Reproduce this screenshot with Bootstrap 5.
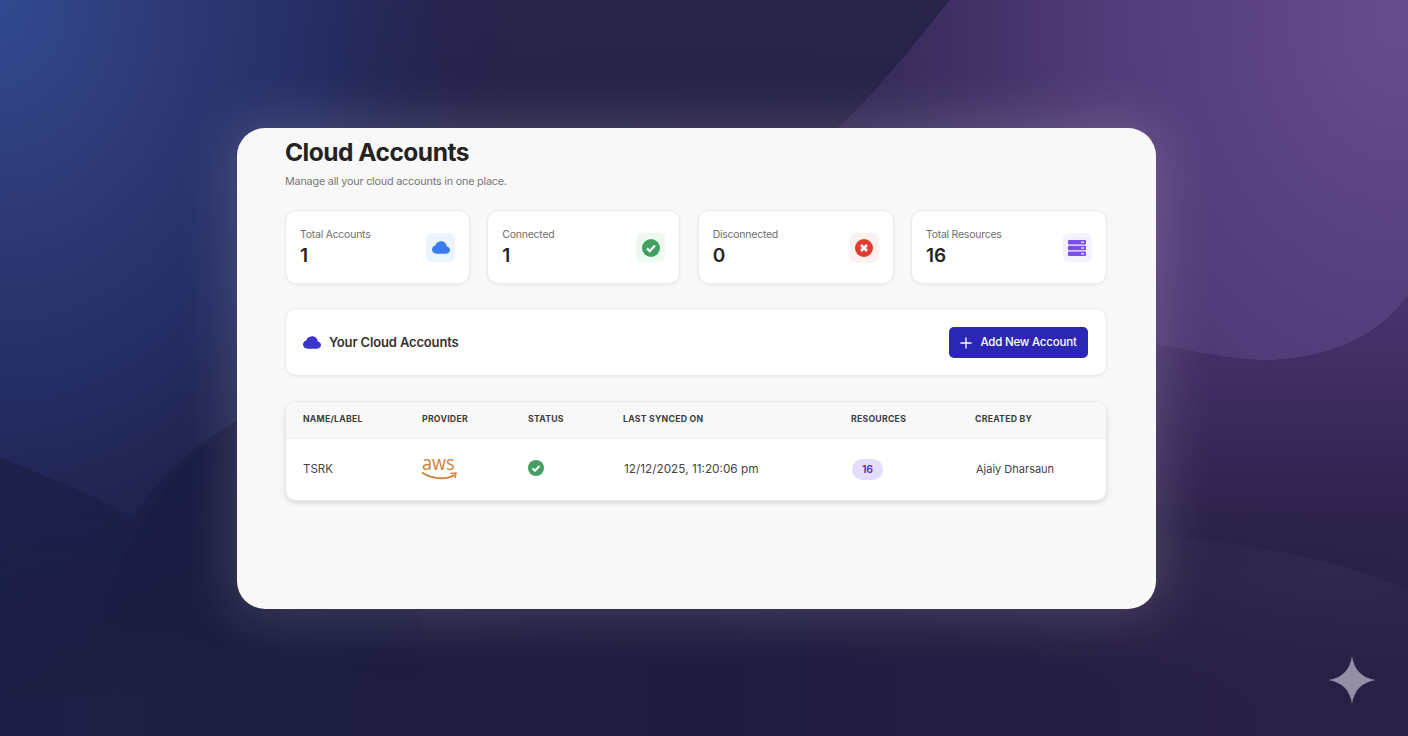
<!DOCTYPE html>
<html lang="en">
<head>
<meta charset="utf-8">
<title>Cloud Accounts</title>
<link href="https://cdn.jsdelivr.net/npm/bootstrap@5.3.0/dist/css/bootstrap.min.css" rel="stylesheet">
<style>
html,body{height:100%;margin:0}
body{font-family:Inter,"Liberation Sans",sans-serif;background:#1f1d40;overflow:hidden;position:relative;color:#262626}
.bg-art{position:absolute;inset:0;width:100%;height:100%}
.spark{position:absolute;right:32px;bottom:32px;width:48px;height:48px}
.stage{position:relative;height:100%;padding-right:15px}
.panel{width:919px;height:481px;border-radius:28px;background:#f8f8f8;padding:7px 49px 0 48px;box-shadow:0 0 55px 6px rgba(255,255,255,.17)}
.page-title{font-size:24.5px;font-weight:700;line-height:34px;letter-spacing:-.5px;margin:0;color:#232323}
.page-sub{font-size:10.8px;line-height:16px;letter-spacing:-.2px;color:#777;margin:5px 0 20px}
.stats{display:grid;grid-template-columns:185px 193px 196px 196px;gap:17.33px}
.stat{height:74px;background:#fff;border:1px solid #e9eaea;border-radius:11px;box-shadow:0 1px 3px rgba(0,0,0,.06);padding:0 14px}
.stat-label{font-size:10.5px;line-height:14px;letter-spacing:-.25px;color:#6f6f6f;margin-top:2px}
.stat-num{font-size:19px;font-weight:600;line-height:24px;color:#252525;margin-top:2px}
.ico-tile{width:29px;height:29px;border-radius:6px;margin-top:2px}
.t-blue{background:#edf3fd}.t-green{background:#eefaf1}.t-red{background:#fdf0ee}.t-violet{background:#f4f0fe}
.bar{height:68px;margin-top:24px;background:#fff;border:1px solid #e9eaea;border-radius:11px;box-shadow:0 1px 3px rgba(0,0,0,.05);padding:2px 18px 0 17px}
.bar-title{font-size:13px;font-weight:600;letter-spacing:-.15px;color:#333}
.btn-add{background:#2b27b4;border:0;border-radius:5px;color:#fff;height:31px;width:139px;font-size:11.5px;font-weight:500;letter-spacing:-.2px;padding:0}
.btn-add:hover{background:#2b27b4;color:#fff}
.tbl-wrap{margin-top:25px;background:#fff;border:1px solid #e9eaea;border-radius:11px;box-shadow:0 2px 5px rgba(0,0,0,.12);overflow:hidden}
.acct-table{table-layout:fixed;margin:0;width:100%}
.acct-table th{background:#f8f8f8;height:37px;padding:0;font-size:8.7px;font-weight:700;letter-spacing:.25px;color:#3d3d3d;vertical-align:middle;border:0;border-bottom:1px solid #f0f0f0}
.acct-table td{height:61px;padding:0;font-size:11px;color:#444;vertical-align:middle;border:0}
.acct-table th:first-child,.acct-table td:first-child{padding-left:17px}
.acct-table td.cell-name{font-size:11.5px}
.acct-table td.cell-date{font-size:11.8px;padding-left:1px;padding-top:1px}
.acct-table td.cell-inset{padding-left:1px}
.row-logo{display:block;overflow:visible}
.row-status{display:block;margin-bottom:3px}
.pill-num{display:inline-block;width:31px;height:21px;line-height:21px;border-radius:11px;background:#e3dcfa;color:#4b32b8;font-size:10.5px;font-weight:600;text-align:center;vertical-align:middle}
</style>
</head>
<body>
<svg class="bg-art" viewBox="0 0 1408 736" preserveAspectRatio="none" aria-hidden="true">
<defs>
<linearGradient id="base" x1="0" y1="0" x2="1" y2="0"><stop offset="0" stop-color="#1d2045"/><stop offset=".5" stop-color="#1f1c3f"/><stop offset="1" stop-color="#2b2147"/></linearGradient>
<linearGradient id="topdark" x1="0" y1="0" x2="0" y2="1"><stop offset="0" stop-color="#29244b"/><stop offset="1" stop-color="#29244b" stop-opacity="0"/></linearGradient>
<radialGradient id="blue" cx="0" cy="0" r="1" gradientUnits="userSpaceOnUse" gradientTransform="translate(0 0) scale(520 660)"><stop offset="0" stop-color="#30498f"/><stop offset=".3" stop-color="#2f3b78"/><stop offset=".62" stop-color="#252f68" stop-opacity=".85"/><stop offset="1" stop-color="#1f2250" stop-opacity="0"/></radialGradient>
<radialGradient id="purple" cx="0" cy="0" r="1" gradientUnits="userSpaceOnUse" gradientTransform="translate(1400 20) scale(620 800)"><stop offset="0" stop-color="#654c8e"/><stop offset=".48" stop-color="#523b78"/><stop offset=".65" stop-color="#44336a"/><stop offset=".81" stop-color="#392c5c"/><stop offset="1" stop-color="#322750"/></radialGradient>
<linearGradient id="rightlow" gradientUnits="userSpaceOnUse" x1="0" y1="300" x2="0" y2="600"><stop offset="0" stop-color="#4a3370"/><stop offset=".67" stop-color="#30234e"/><stop offset="1" stop-color="#2b2047" stop-opacity="0"/></linearGradient>
<radialGradient id="rightlower" cx="0" cy="0" r="1" gradientUnits="userSpaceOnUse" gradientTransform="translate(1330 570) scale(420 135)"><stop offset="0" stop-color="#33274f"/><stop offset="1" stop-color="#2b2147" stop-opacity="0"/></radialGradient>
<linearGradient id="leftdark" gradientUnits="userSpaceOnUse" x1="0" y1="420" x2="0" y2="700"><stop offset="0" stop-color="#14173a" stop-opacity=".45"/><stop offset="1" stop-color="#14173a" stop-opacity="0"/></linearGradient>
</defs>
<rect width="1408" height="736" fill="url(#base)"/>
<rect x="200" width="800" height="300" fill="url(#topdark)"/>
<rect width="1408" height="736" fill="url(#blue)"/>
<path d="M950 0C905 55 870 100 830 135L1156 345C1200 352 1240 362 1275 360C1330 356 1375 340 1408 295V0Z" fill="url(#purple)"/>
<path d="M830 135L1156 345C1200 352 1240 362 1275 360C1330 356 1375 340 1408 295V600H830Z" fill="url(#rightlow)"/>
<path d="M1000 530C1200 530 1320 552 1408 590V736H1000Z" fill="url(#rightlower)"/>
<path d="M0 457C50 478 100 498 133 517C160 475 195 445 237 420H420V736H0Z" fill="url(#leftdark)"/>
<path d="M237 420C170 465 110 550 75 690V736H420V420Z" fill="url(#leftdark)"/>
</svg>
<svg class="spark" viewBox="0 0 48 48" aria-hidden="true"><path d="M24 0C26 14 34 22 48 24C34 26 26 34 24 48C22 34 14 26 0 24C14 22 22 14 24 0Z" fill="#958fa5"/></svg>
<div class="stage d-flex align-items-center justify-content-center">
<main class="panel">
<h1 class="page-title">Cloud Accounts</h1>
<p class="page-sub">Manage all your cloud accounts in one place.</p>
<section class="stats">
<div class="stat d-flex align-items-center justify-content-between">
<div><div class="stat-label">Total Accounts</div><div class="stat-num">1</div></div>
<div class="ico-tile t-blue d-flex align-items-center justify-content-center"><svg width="18" height="18" viewBox="0 0 16 16"><path fill="#3b7bf0" d="M4.406 3.342A5.53 5.53 0 0 1 8 2c2.69 0 4.923 2 5.166 4.579C14.758 6.804 16 8.137 16 9.773 16 11.569 14.502 13 12.687 13H3.781C1.708 13 0 11.366 0 9.318c0-1.763 1.266-3.223 2.942-3.593.143-.863.698-1.723 1.464-2.383z"/></svg></div>
</div>
<div class="stat d-flex align-items-center justify-content-between">
<div><div class="stat-label">Connected</div><div class="stat-num">1</div></div>
<div class="ico-tile t-green d-flex align-items-center justify-content-center"><svg width="18" height="18" viewBox="0 0 18 18"><circle cx="9" cy="9" r="9" fill="#42a061"/><path d="M5 9.4l2.8 2.7L13 6.6" fill="none" stroke="#fff" stroke-width="2.2"/></svg></div>
</div>
<div class="stat d-flex align-items-center justify-content-between">
<div><div class="stat-label">Disconnected</div><div class="stat-num">0</div></div>
<div class="ico-tile t-red d-flex align-items-center justify-content-center"><svg width="18" height="18" viewBox="0 0 18 18"><circle cx="9" cy="9" r="9" fill="#e03c2e"/><path d="M6 6l6 6M12 6l-6 6" fill="none" stroke="#fff" stroke-width="2.6"/></svg></div>
</div>
<div class="stat d-flex align-items-center justify-content-between">
<div><div class="stat-label">Total Resources</div><div class="stat-num">16</div></div>
<div class="ico-tile t-violet d-flex align-items-center justify-content-center"><svg width="18" height="16" viewBox="0 0 18 16"><g fill="#7a4fe8"><rect width="18" height="4.4" rx=".8"/><rect y="5.8" width="18" height="4.4" rx=".8"/><rect y="11.6" width="18" height="4.4" rx=".8"/></g><g fill="#f4f0fe"><rect x="13" y="1.6" width="3" height="1.2"/><rect x="13" y="7.4" width="3" height="1.2"/><rect x="13" y="13.2" width="3" height="1.2"/></g></svg></div>
</div>
</section>
<section class="bar d-flex align-items-center justify-content-between">
<div class="d-flex align-items-center gap-2"><svg width="18" height="18" viewBox="0 0 16 16"><path fill="#3a35cc" d="M4.406 3.342A5.53 5.53 0 0 1 8 2c2.69 0 4.923 2 5.166 4.579C14.758 6.804 16 8.137 16 9.773 16 11.569 14.502 13 12.687 13H3.781C1.708 13 0 11.366 0 9.318c0-1.763 1.266-3.223 2.942-3.593.143-.863.698-1.723 1.464-2.383z"/></svg><span class="bar-title">Your Cloud Accounts</span></div>
<button type="button" class="btn btn-add d-flex align-items-center justify-content-center gap-2"><svg width="12" height="12" viewBox="0 0 12 12"><path d="M6 .5v11M.5 6h11" stroke="#fff" stroke-width="1.3" fill="none"/></svg>Add New Account</button>
</section>
<section class="tbl-wrap">
<table class="table acct-table">
<colgroup><col style="width:136px"><col style="width:106px"><col style="width:95px"><col style="width:228px"><col style="width:124px"><col></colgroup>
<thead><tr><th>NAME/LABEL</th><th>PROVIDER</th><th>STATUS</th><th>LAST SYNCED ON</th><th>RESOURCES</th><th>CREATED BY</th></tr></thead>
<tbody><tr>
<td class="cell-name">TSRK</td>
<td><svg class="row-logo" width="36" height="25" viewBox="0 0 36 25"><text transform="scale(.88 1)" x="0" y="13" font-family="Open Sans,Liberation Sans,sans-serif" font-size="20.5" font-weight="500" fill="#cc8238">aws</text><path d="M0 15.5C8 21.5 24 23.5 32.5 18" fill="none" stroke="#cc8238" stroke-width="1.8"/><path d="M28.5 16.6L34 16 33 21" fill="none" stroke="#cc8238" stroke-width="1.5"/></svg></td>
<td><svg class="row-status" width="16" height="16" viewBox="0 0 18 18"><circle cx="9" cy="9" r="9" fill="#42a061"/><path d="M5 9.4l2.8 2.7L13 6.6" fill="none" stroke="#fff" stroke-width="2.2"/></svg></td>
<td class="cell-date">12/12/2025, 11:20:06 pm</td>
<td class="cell-inset"><span class="pill-num">16</span></td>
<td class="cell-inset">Ajaiy Dharsaun</td>
</tr></tbody>
</table>
</section>
</main>
</div>
<script src="https://cdn.jsdelivr.net/npm/bootstrap@5.3.0/dist/js/bootstrap.bundle.min.js"></script>
</body>
</html>
